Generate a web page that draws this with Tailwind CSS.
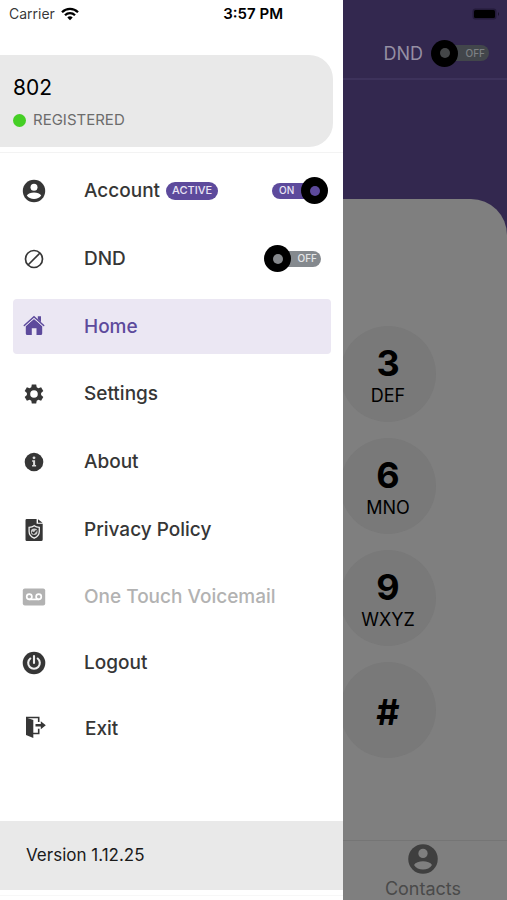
<!DOCTYPE html>
<html lang="en">
<head>
<meta charset="utf-8">
<meta name="viewport" content="width=device-width, initial-scale=1">
<title>Softphone menu</title>
<script src="https://cdn.jsdelivr.net/npm/@tailwindcss/browser@4"></script>
</head>
<body class="bg-white font-['Inter','Liberation_Sans',sans-serif] text-[#363636]">
<div class="flex min-h-screen overflow-hidden">

  <aside class="flex w-[343px] shrink-0 flex-col bg-white">
    <div class="flex h-7 items-center justify-between pr-[60px] pl-[9px] text-sm">
      <div class="flex items-center gap-[6px] text-black/80">
        <span>Carrier</span>
        <svg class="h-[14px] w-[18px] text-black" viewBox="0 0 18 14" fill="none" stroke="currentColor" stroke-width="2.3" aria-hidden="true">
          <path d="M1 5.2C5.500 .8 12.500 .8 17 5.200"/>
          <path d="M4 8.300C6.800 5.500 11.200 5.500 14 8.300"/>
          <path d="M9 13.200 6.300 10.400C7.900 9 10.100 9 11.700 10.400Z" fill="currentColor" stroke="none"/>
        </svg>
      </div>
      <time class="text-[15px] font-semibold text-black">3:57 PM</time>
    </div>

    <div class="border-b border-[#f3f3f3] pt-[27px] pb-[5px]">
      <div class="mr-[10px] flex h-[92px] flex-col justify-center gap-[6px] rounded-r-[24px] bg-[#e9e9e9] pt-1 pl-[13px]">
        <p class="text-[21px] leading-7 text-black">802</p>
        <p class="flex items-center gap-[7px] text-[15px] leading-6 text-[#6c6c6c]"><span class="size-[13px] rounded-full bg-[#45cf25]"></span>REGISTERED</p>
      </div>
    </div>

    <nav class="flex flex-1 flex-col gap-3 pt-[10px] pr-3 pl-[13px] text-[19px] font-medium" aria-label="Main menu">
      <ul class="flex flex-col gap-[13px]">
        <li class="flex h-[55px] items-center pl-[9px]">
          <svg class="mr-[38px] size-6 shrink-0" viewBox="0 0 24 24" aria-hidden="true"><circle cx="12" cy="12" r="11.200" fill="currentColor"/><circle cx="12" cy="8.300" r="3.500" fill="#fff"/><path d="M4.800 16.500C7 12.600 17 12.600 19.200 16.500C16.500 21 7.500 21 4.800 16.500Z" fill="#fff"/></svg>
          <label for="account" class="pt-[2px]">Account</label>
          <span class="ml-[6px] flex h-[18px] items-center rounded-full bg-[#5d4a9c] px-[6px] text-[11px] text-[#e9e4f5]">ACTIVE</span>
          <label class="relative mr-[3px] ml-auto flex h-[27px] w-[56px] items-center">
            <input id="account" type="checkbox" checked class="h-4 w-[46px] appearance-none rounded-full bg-[#5d4a9c]">
            <span class="absolute left-[7px] text-[10px] text-[#e9e4f5]">ON</span>
            <span class="absolute right-0 flex size-[27px] items-center justify-center rounded-full bg-black"><span class="size-[10px] rounded-full bg-[#5d4a9c]"></span></span>
          </label>
        </li>
        <li class="flex h-[55px] items-center pl-[9px]">
          <svg class="mr-[38px] size-6 shrink-0" viewBox="0 0 24 24" fill="none" stroke="currentColor" stroke-width="1.700" aria-hidden="true"><circle cx="12" cy="12" r="8.500"/><path d="M6 18 18 6"/></svg>
          <label for="dnd" class="pt-[2px]">DND</label>
          <label class="relative mr-[10px] ml-auto flex h-[27px] w-[57px] items-center justify-end">
            <input id="dnd" type="checkbox" class="h-4 w-[46px] appearance-none rounded-full bg-[#84898e]">
            <span class="absolute right-[4px] text-[10px] text-[#e4e6e8]">OFF</span>
            <span class="absolute left-0 flex size-[27px] items-center justify-center rounded-full bg-black"><span class="size-[10px] rounded-full bg-[#85888c]"></span></span>
          </label>
        </li>
        <li>
          <a href="#home" aria-current="page" class="flex h-[55px] items-center rounded-[4px] bg-[#ebe7f3] pl-[9px] text-[#5d4a9c]">
            <svg class="mr-[38px] size-6 shrink-0" viewBox="0 0 24 24" fill="currentColor" aria-hidden="true"><path d="M12 4 20.200 11V18.500Q20.200 20 18.700 20H14.500V13.300H9.800V20H5.300Q3.800 20 3.800 18.500V11Z"/><path d="M15.800 1.200H19V7.300L15.800 4.300Z"/><path d="M12 3.300 20.800 11.300M12 3.300 3.200 11.300" fill="none" stroke="#ebe7f3" stroke-width=".9"/><path d="M2.300 10.500 12 1.700 21.700 10.500" fill="none" stroke="currentColor" stroke-width="1.500" stroke-linecap="round"/></svg>
            <span class="pt-[2px]">Home</span>
          </a>
        </li>
      </ul>
      <ul class="flex flex-col gap-[13px]">
        <li>
          <a href="#settings" class="flex h-[55px] items-center pl-[9px]">
            <svg class="mr-[38px] size-6 shrink-0" viewBox="0 0 24 24" aria-hidden="true"><path fill="currentColor" fill-rule="evenodd" d="M9.800 2.500h4.400l.5 2.800 1.700 1 2.700-1 2.200 3.800-2.200 1.900v2l2.200 1.900-2.200 3.800-2.700-1-1.700 1-.5 2.800H9.800l-.5-2.800-1.700-1-2.700 1-2.200-3.800L4.900 13v-2L2.700 9.100l2.200-3.800 2.700 1 1.700-1ZM12 8.200a3.800 3.800 0 1 0 0 7.600 3.800 3.800 0 0 0 0-7.600Z"/></svg>
            <span class="pt-[2px]">Settings</span>
          </a>
        </li>
        <li>
          <a href="#about" class="flex h-[55px] items-center pl-[9px]">
            <svg class="mr-[38px] size-6 shrink-0" viewBox="0 0 24 24" aria-hidden="true"><circle cx="12" cy="12" r="9.300" fill="currentColor"/><g fill="#ddd"><circle cx="12" cy="7.800" r="1.400"/><path d="M10.100 10.200h3V15h1v1.600h-4V15h1v-3.200h-1Z"/></g></svg>
            <span class="pt-[2px]">About</span>
          </a>
        </li>
        <li>
          <a href="#privacy" class="flex h-[55px] items-center pl-[9px]">
            <svg class="mr-[38px] size-6 shrink-0" viewBox="0 0 24 24" aria-hidden="true"><path d="M4.700 1H14.600V5.700H20.700V21.500Q20.700 23 19.200 23H4.700Q3.500 23 3.500 21.700V2.300Q3.500 1 4.700 1Z" fill="currentColor"/><path d="M16 1.200 20.500 4.800H16Z" fill="currentColor"/><path d="M12.200 7.700C13.700 8.900 15.300 9.300 17.300 9.400V13.500C17.300 17 15 19 12.200 20.200C9.400 19 7.100 17 7.100 13.500V9.400C9.100 9.300 10.700 8.900 12.200 7.700Z" fill="none" stroke="#eee" stroke-width="1.300"/><circle cx="12.200" cy="13.800" r="3.300" fill="#ccc"/><path d="M10.200 13.900 11.700 15.400 14.600 12.300" fill="none" stroke="currentColor" stroke-width="1.500"/></svg>
            <span class="pt-[2px]">Privacy Policy</span>
          </a>
        </li>
      </ul>
      <ul class="flex flex-col gap-[11px]">
        <li>
          <button type="button" disabled class="flex h-[55px] w-full items-center pl-[9px] text-[#b2b2b2]">
            <svg class="mr-[38px] size-6 shrink-0" viewBox="0 0 24 24" fill="none" aria-hidden="true"><rect x=".8" y="3.500" width="22.400" height="17" rx="2" fill="currentColor"/><g stroke="#fff" stroke-width="1.700"><circle cx="7.300" cy="11.800" r="2.600"/><circle cx="16.700" cy="11.800" r="2.600"/><path d="M7.300 14.400H16.700"/></g></svg>
            <span class="pt-[2px]">One Touch Voicemail</span>
          </button>
        </li>
        <li>
          <button type="button" class="flex h-[55px] w-full items-center pl-[9px]">
            <svg class="mr-[38px] size-6 shrink-0" viewBox="0 0 24 24" fill="none" aria-hidden="true"><circle cx="12" cy="12" r="11.300" fill="currentColor"/><path d="M8.300 7.500A5.800 5.800 0 1 0 15.700 7.500M12 5V12" stroke="#eee" stroke-width="2.100" stroke-linecap="round"/></svg>
            <span class="pt-[2px]">Logout</span>
          </button>
        </li>
        <li>
          <button type="button" class="flex h-[55px] w-full items-center pl-[9px]">
            <svg class="mr-[39px] mb-1 size-6 shrink-0" viewBox="0 0 24 24" aria-hidden="true"><path d="M4 2.500 11.300 5V23L4 20Z" fill="currentColor"/><path d="M4 2.500H16.700V7M16.700 13.700V18.500H11" fill="none" stroke="currentColor" stroke-width="1.600"/><path d="M13.500 9H18.800V6.200L23.800 10.300 18.800 14.300V11.600H13.500Z" fill="currentColor"/></svg>
            <span class="pt-[2px]">Exit</span>
          </button>
        </li>
      </ul>
    </nav>

    <footer class="border-b border-[#f7f7f7] pb-[5px]">
      <p class="flex h-[69px] items-center bg-[#e9e9e9] pl-[26px] text-[17px] text-[#1a1a1a]">Version 1.12.25</p>
    </footer>
    <div class="h-1"></div>
  </aside>

  <main class="flex min-w-0 flex-1 flex-col overflow-hidden bg-[#33284f]">
    <div class="flex h-7 items-center justify-end pr-[7px]">
      <svg class="h-3 w-7 text-black" viewBox="0 0 28 12" fill="currentColor" aria-hidden="true"><rect x=".5" y=".500" width="24" height="11" rx="3" fill="#241b3a"/><rect x="2" y="2" width="21" height="8" rx="1.500"/><path d="M26 4Q28 6 26 8Z" fill="#1a132b"/></svg>
    </div>
    <header class="flex h-[52px] items-center justify-end gap-2 border-b-2 border-[#3d325b] pr-[18px]">
      <label for="line-dnd" class="text-[18px] text-[#958fa3]">DND</label>
      <label class="relative flex h-[27px] w-[58px] items-center justify-end">
        <input id="line-dnd" type="checkbox" class="h-4 w-[46px] appearance-none rounded-full bg-[#42464b]">
        <span class="absolute right-[4px] text-[10px] font-medium text-[#7d8084]">OFF</span>
        <span class="absolute left-0 flex size-[27px] items-center justify-center rounded-full bg-black"><span class="size-[10px] rounded-full bg-[#444648]"></span></span>
      </label>
    </header>
    <section class="mt-[119px] flex flex-1 flex-col justify-between rounded-tr-[36px] bg-[#7f7f7f]">
      <div class="-ml-[3px] flex flex-col gap-4 pt-[127px] text-black">
        <button type="button" class="flex size-24 flex-col items-center justify-center rounded-full bg-[#797979] pt-[6px]"><span class="text-[36px] leading-[38px] font-bold">3</span><span class="text-[18px] leading-7">DEF</span></button>
        <button type="button" class="flex size-24 flex-col items-center justify-center rounded-full bg-[#797979] pt-[6px]"><span class="text-[36px] leading-[38px] font-bold">6</span><span class="text-[18px] leading-7">MNO</span></button>
        <button type="button" class="flex size-24 flex-col items-center justify-center rounded-full bg-[#797979] pt-[6px]"><span class="text-[36px] leading-[38px] font-bold">9</span><span class="text-[18px] leading-7">WXYZ</span></button>
        <button type="button" class="flex size-24 flex-col items-center justify-center rounded-full bg-[#797979] pt-1"><span class="text-[36px] leading-[38px] font-bold">#</span></button>
      </div>
      <a href="#contacts" class="flex h-[60px] flex-col items-center border-t border-[#757575] pt-[3px] pr-1 text-[18px] leading-[29px] text-[#4a4a4a]">
        <svg class="size-[30px] shrink-0" viewBox="0 0 24 24" aria-hidden="true"><circle cx="12" cy="12" r="11.800" fill="#3f3f3f"/><circle cx="12" cy="7.500" r="3.700" fill="#7f7f7f"/><path d="M4.800 16.700C7 12.700 17 12.700 19.200 16.700C16.500 21.600 7.500 21.600 4.800 16.700Z" fill="#7f7f7f"/></svg>
        Contacts
      </a>
    </section>
  </main>
</div>
</body>
</html>
